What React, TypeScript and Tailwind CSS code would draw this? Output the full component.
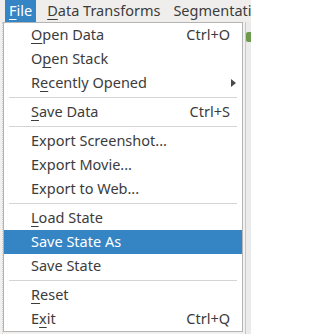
import React from "react";

type Item =
  | { kind: "sep" }
  | {
      kind: "item";
      label: string;
      mnemonic?: number;
      shortcut?: string;
      submenu?: boolean;
      active?: boolean;
    };

const items: Item[] = [
  { kind: "item", label: "Open Data", mnemonic: 0, shortcut: "Ctrl+O" },
  { kind: "item", label: "Open Stack", mnemonic: 1 },
  { kind: "item", label: "Recently Opened", mnemonic: 1, submenu: true },
  { kind: "sep" },
  { kind: "item", label: "Save Data", mnemonic: 0, shortcut: "Ctrl+S" },
  { kind: "sep" },
  { kind: "item", label: "Export Screenshot..." },
  { kind: "item", label: "Export Movie..." },
  { kind: "item", label: "Export to Web..." },
  { kind: "sep" },
  { kind: "item", label: "Load State", mnemonic: 0 },
  { kind: "item", label: "Save State As", active: true },
  { kind: "item", label: "Save State" },
  { kind: "sep" },
  { kind: "item", label: "Reset", mnemonic: 0 },
  { kind: "item", label: "Exit", mnemonic: 1, shortcut: "Ctrl+Q" },
];

const Label: React.FC<{ text: string; mnemonic?: number }> = ({ text, mnemonic }) => {
  if (mnemonic === undefined) return <>{text}</>;
  return (
    <>
      {text.slice(0, mnemonic)}
      <span className="underline underline-offset-[3px] decoration-1">{text[mnemonic]}</span>
      {text.slice(mnemonic + 1)}
    </>
  );
};

const App: React.FC = () => {
  return (
    <div
      className="relative w-[251px] h-[334px] overflow-hidden bg-[#f2f1f0] text-[14.5px] text-[#3c3c3c]"
      style={{ fontFamily: '"Noto Sans", "DejaVu Sans", sans-serif' }}
    >
      {/* menu bar */}
      <div className="flex h-[22px] items-center overflow-hidden whitespace-nowrap bg-[#efeeed]">
        <div className="ml-[5px] flex h-full items-center bg-[#3584c4] px-[4px] text-white">
          <Label text="File" mnemonic={0} />
        </div>
        <div className="ml-[11px] flex h-full items-center">
          <Label text="Data Transforms" mnemonic={0} />
        </div>
        <div className="ml-[13px] flex h-full items-center">Segmentation</div>
      </div>

      {/* app content behind the menu */}
      <div className="flex h-[312px]">
        <div className="w-[3px] border-r border-dotted border-[#cfcfcf]" />
        <div className="flex-1" />
        <div className="w-[6px] border-l border-[#c8c8c8] bg-[#ebebeb] pt-[10px]">
          <div className="h-[10px] w-[6px] rounded-l-[2px] bg-[#6f9a4e]" />
        </div>
      </div>

      {/* popup menu */}
      <div className="absolute left-[3px] top-[22px] w-[240px] border border-[#b4b4b4] bg-white">
        {items.map((it, i) =>
          it.kind === "sep" ? (
            <div key={i} className="flex h-[5px] items-center px-[5px]">
              <div className="h-px w-full bg-[#d4d4d4]" />
            </div>
          ) : (
            <div
              key={i}
              className={`flex h-[24px] items-center whitespace-nowrap pl-[27px] pr-[12px] ${
                it.active ? "bg-[#3584c4] text-white" : ""
              }`}
            >
              <span className="flex-1">
                <Label text={it.label} mnemonic={it.mnemonic} />
              </span>
              {it.shortcut && <span>{it.shortcut}</span>}
              {it.submenu && (
                <svg width="5" height="8" viewBox="0 0 5 8" className="mr-[-6px]">
                  <path d="M0 0 L5 4 L0 8 Z" fill="#4a4a4a" />
                </svg>
              )}
            </div>
          )
        )}
      </div>
    </div>
  );
};

export default App;
